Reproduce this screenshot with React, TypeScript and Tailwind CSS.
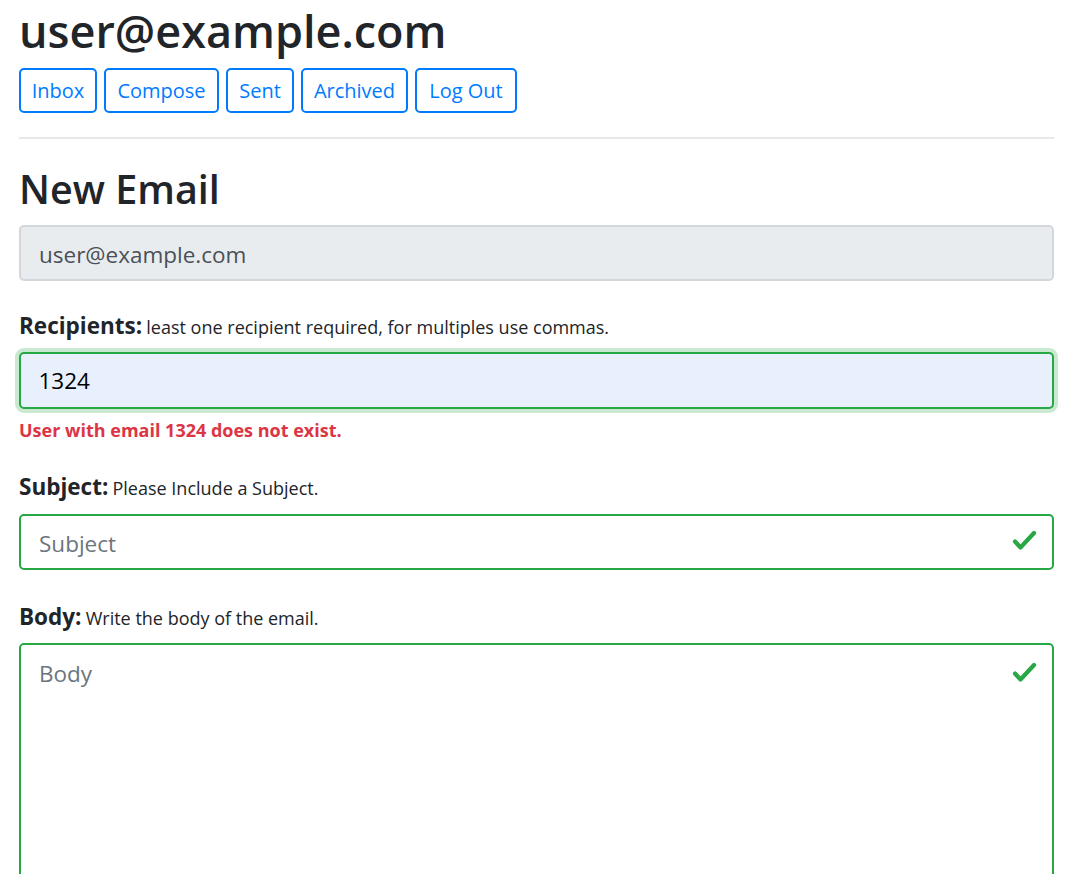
import React from "react";

function Check() {
  return (
    <svg width="26" height="24" viewBox="0 0 26 24" className="block">
      <polyline
        points="3,11.5 8.5,17.5 22,3"
        fill="none"
        stroke="#28a745"
        strokeWidth="4.2"
        strokeLinecap="round"
        strokeLinejoin="round"
      />
    </svg>
  );
}

export default function App() {
  const btn =
    "h-[45px] border-2 border-[#007bff] rounded-[5px] text-[#007bff] text-[20px] flex items-center justify-center";
  return (
    <div className="min-h-[874px] bg-white font-['Open_Sans',sans-serif] text-[#212529] overflow-hidden">
      <div className="ml-[19px] w-[1035px] flex flex-col">
        <h1 className="pt-[3.5px] text-[45px] leading-[54px] font-semibold">user@example.com</h1>

        <div className="mt-[10.5px] flex gap-[7px]">
          <div className={`w-[78px] ${btn}`}>Inbox</div>
          <div className={`w-[115px] ${btn}`}>Compose</div>
          <div className={`w-[68px] ${btn}`}>Sent</div>
          <div className={`w-[107px] ${btn}`}>Archived</div>
          <div className={`w-[102px] ${btn}`}>Log Out</div>
        </div>

        <div className="mt-[24px] h-[2px] bg-[#e8e8e8]" />

        <h2 className="mt-[25px] text-[39.5px] leading-[50px] font-semibold">New Email</h2>

        <div className="mt-[11px] h-[56px] rounded-[5px] border-2 border-[#d3d7dc] bg-[#e9ecef] pl-[18px] pt-[13px] text-[22.5px] leading-[30px] text-[#495057]">
          user@example.com
        </div>

        <div className="mt-[30px] leading-[30px]">
          <span className="text-[22.5px] font-bold">Recipients:</span>{" "}
          <span className="text-[18px]">least one recipient required, for multiples use commas.</span>
        </div>

        <div className="mt-[9px] h-[57px] rounded-[5px] border-[2.5px] border-[#28a745] bg-[#e8f0fe] shadow-[0_0_0_4px_rgba(40,167,69,0.25)] pl-[17.5px] pt-[12px] text-[22.5px] leading-[30px] text-black">
          1324
        </div>

        <div className="mt-[9px] text-[18px] leading-[24px] font-bold text-[#dc3545]">
          User with email 1324 does not exist.
        </div>

        <div className="mt-[30px] leading-[30px]">
          <span className="text-[22.5px] font-bold">Subject:</span>{" "}
          <span className="text-[18px]">Please Include a Subject.</span>
        </div>

        <div className="mt-[10px] h-[56px] rounded-[5px] border-2 border-[#28a745] bg-white pl-[18px] pr-[14px] pt-[13px] text-[22.5px] leading-[30px] text-[#6c757d] flex justify-between items-start">
          <span>Subject</span>
          <span className="mt-[-4.5px] flex items-center h-[34px]"><Check /></span>
        </div>

        <div className="mt-[32px] leading-[30px]">
          <span className="text-[22.5px] font-bold">Body:</span>{" "}
          <span className="text-[18px]">Write the body of the email.</span>
        </div>

        <div className="mt-[9px] h-[300px] rounded-[5px] border-2 border-[#28a745] bg-white pl-[18px] pr-[14px] pt-[14px] text-[22.5px] leading-[30px] text-[#6c757d] flex justify-between items-start">
          <span>Body</span>
          <span className="mt-[3px]"><Check /></span>
        </div>
      </div>
    </div>
  );
}
